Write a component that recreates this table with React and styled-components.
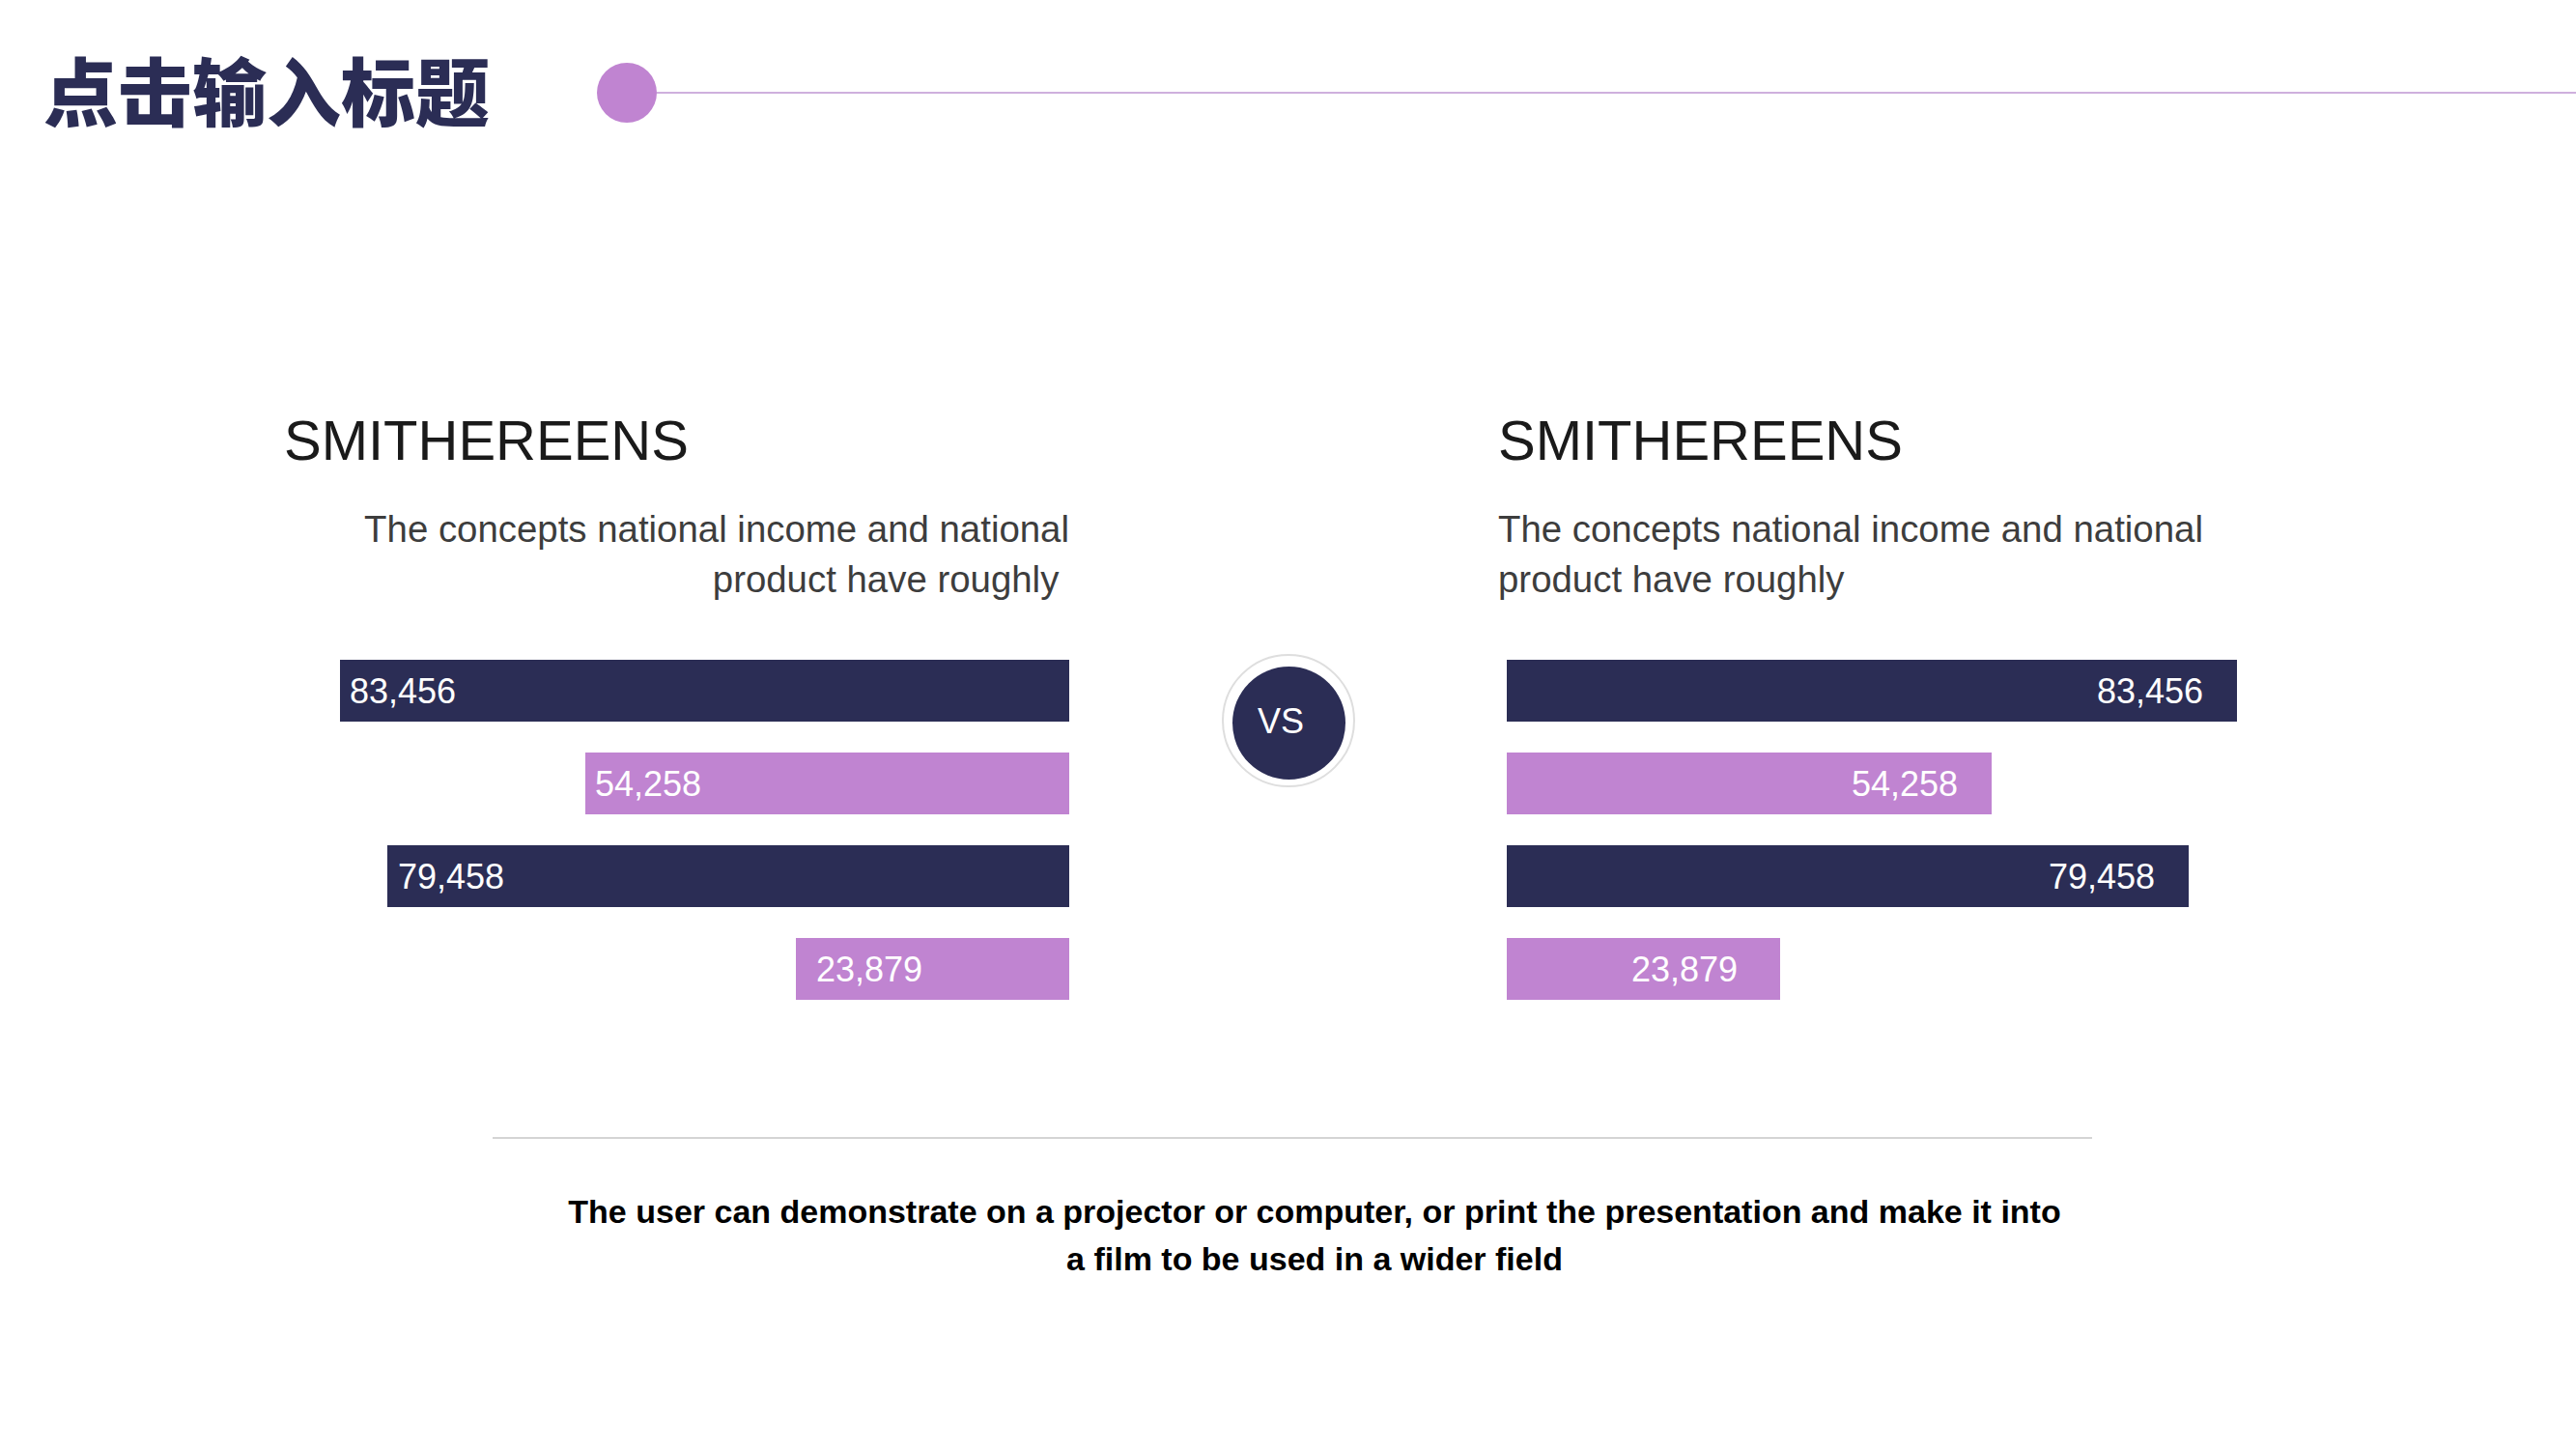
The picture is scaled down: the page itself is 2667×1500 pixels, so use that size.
import React from 'react';
import styled, { createGlobalStyle } from 'styled-components';

const NAVY = '#2b2d55';
const ORCHID = '#c084d1';

const GlobalStyle = createGlobalStyle`
  html, body {
    margin: 0;
    padding: 0;
    background: #ffffff;
  }
  body {
    font-family: "Liberation Sans", Arial, "Noto Sans CJK SC", sans-serif;
  }
`;

const panels = [
  {
    side: 'left',
    title: 'SMITHEREENS',
    bars: [
      { value: '83,456', width: 755, color: NAVY, inset: 10 },
      { value: '54,258', width: 501, color: ORCHID, inset: 10 },
      { value: '79,458', width: 706, color: NAVY, inset: 11 },
      { value: '23,879', width: 283, color: ORCHID, inset: 21 },
    ],
  },
  {
    side: 'right',
    title: 'SMITHEREENS',
    bars: [
      { value: '83,456', width: 756, color: NAVY, inset: 35 },
      { value: '54,258', width: 502, color: ORCHID, inset: 35 },
      { value: '79,458', width: 706, color: NAVY, inset: 35 },
      { value: '23,879', width: 283, color: ORCHID, inset: 44 },
    ],
  },
];

function Panel({ data }) {
  return (
    <PanelBox $side={data.side}>
      <PanelTitle>{data.title}</PanelTitle>
      <PanelText $side={data.side}>
        The concepts national income and national
        <br />
        product have roughly{'\u00a0'}
      </PanelText>
      <BarStack $side={data.side}>
        {data.bars.map((bar) => (
          <Bar
            key={bar.value}
            $color={bar.color}
            $side={data.side}
            $inset={bar.inset}
            style={{ width: bar.width }}
          >
            {bar.value}
          </Bar>
        ))}
      </BarStack>
    </PanelBox>
  );
}

export default function App() {
  return (
    <>
      <GlobalStyle />
      <Slide>
        <Header>
          <Title>点击输入标题</Title>
          <Dot />
          <HeaderLine />
        </Header>

        <Compare>
          <Panel data={panels[0]} />
          <VsRing>
            <VsCircle>VS</VsCircle>
          </VsRing>
          <Panel data={panels[1]} />
        </Compare>

        <Footer>
          <Divider />
          <FooterText>
            The user can demonstrate on a projector or computer, or print the presentation and make it into
            <br />
            a film to be used in a wider field
          </FooterText>
        </Footer>
      </Slide>
    </>
  );
}

const Slide = styled.div`
  width: 2667px;
  height: 1500px;
  overflow: hidden;
  background: #ffffff;
  display: flex;
  flex-direction: column;
`;

const Header = styled.header`
  height: 191px;
  display: flex;
  align-items: center;
  padding-left: 45px;
`;

const Title = styled.h1`
  margin: 0 0 8px;
  font-family: "Noto Sans CJK SC", "Noto Sans CJK TC", sans-serif;
  font-size: 77px;
  font-weight: 900;
  line-height: 1;
  color: ${NAVY};
`;

const Dot = styled.div`
  width: 62px;
  height: 62px;
  margin-left: 111px;
  border-radius: 50%;
  background: ${ORCHID};
  flex-shrink: 0;
`;

const HeaderLine = styled.div`
  flex: 1;
  height: 2px;
  background: #cfb0dd;
`;

const Compare = styled.main`
  display: flex;
  align-items: flex-start;
  padding-left: 294px;
  margin-top: 236px;
`;

const PanelBox = styled.section`
  width: ${(p) => (p.$side === 'left' ? '813px' : '767px')};
  margin-left: ${(p) => (p.$side === 'right' ? '148px' : '0')};
  flex-shrink: 0;
  display: flex;
  flex-direction: column;
`;

const PanelTitle = styled.h2`
  margin: 0;
  font-size: 58px;
  font-weight: 400;
  line-height: 58px;
  color: #1a1a1a;
`;

const PanelText = styled.p`
  margin: 37px 0 0;
  font-size: 38.4px;
  line-height: 52px;
  color: #3d3d3d;
  text-align: ${(p) => (p.$side === 'left' ? 'right' : 'left')};
  white-space: nowrap;
`;

const BarStack = styled.div`
  margin-top: 57px;
  display: flex;
  flex-direction: column;
  gap: 32px;
  align-items: ${(p) => (p.$side === 'left' ? 'flex-end' : 'flex-start')};
  padding-left: ${(p) => (p.$side === 'right' ? '9px' : '0')};
`;

const Bar = styled.div`
  height: 64px;
  box-sizing: border-box;
  display: flex;
  align-items: center;
  justify-content: ${(p) => (p.$side === 'left' ? 'flex-start' : 'flex-end')};
  padding-left: ${(p) => (p.$side === 'left' ? `${p.$inset}px` : '0')};
  padding-right: ${(p) => (p.$side === 'right' ? `${p.$inset}px` : '0')};
  padding-top: 2px;
  background: ${(p) => p.$color};
  color: #ffffff;
  font-size: 36px;
  line-height: 1;
`;

const VsRing = styled.div`
  width: 138px;
  height: 138px;
  box-sizing: border-box;
  margin-top: 250px;
  margin-left: 158px;
  border: 2px solid #dedede;
  border-radius: 50%;
  display: flex;
  align-items: center;
  justify-content: center;
  flex-shrink: 0;
`;

const VsCircle = styled.div`
  width: 117px;
  height: 117px;
  margin-top: 4px;
  box-sizing: border-box;
  border-radius: 50%;
  background: ${NAVY};
  color: #ffffff;
  font-size: 36px;
  display: flex;
  align-items: center;
  justify-content: center;
  padding-right: 16px;
  padding-bottom: 2px;
`;

const Footer = styled.footer`
  display: flex;
  flex-direction: column;
  padding-left: 510px;
  margin-top: 142px;
`;

const Divider = styled.div`
  width: 1656px;
  height: 2px;
  background: #d4d4d4;
`;

const FooterText = styled.p`
  width: 1702px;
  margin: 51px 0 0;
  font-size: 34px;
  font-weight: 700;
  line-height: 49px;
  color: #000000;
  text-align: center;
  white-space: nowrap;
`;
